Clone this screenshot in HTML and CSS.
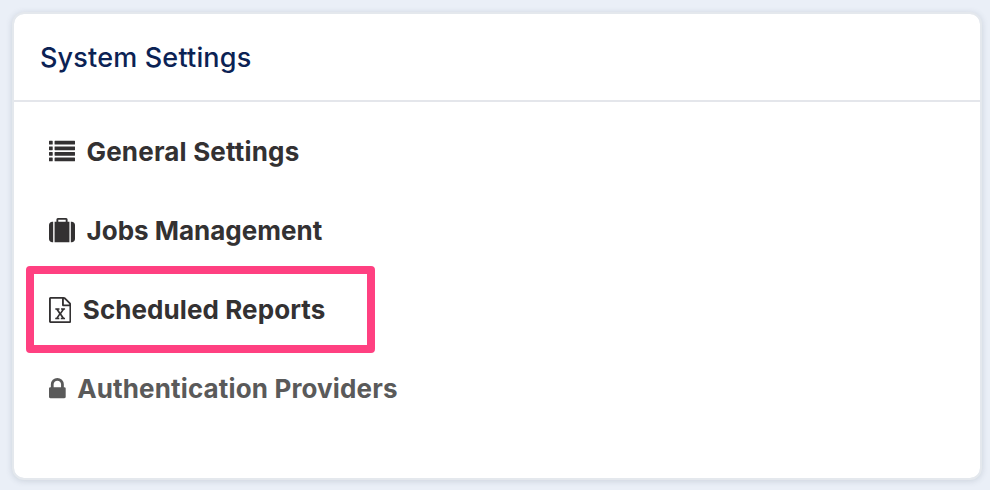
FILE: index.html
```
<!DOCTYPE html>
<html lang="en">
<head>
  <meta charset="utf-8">
  <title>System Settings</title>
  <link rel="stylesheet" href="styles.css">
</head>
<body>

  <div class="card">
    <h1 class="card-header">System Settings</h1>

    <ul class="settings">
      <li class="setting general">
        <svg class="icon icon-list" viewBox="0 0 1792 1792"><path d="M256 1312v192q0 13-9.500 22.500t-22.500 9.500h-192q-13 0-22.500-9.500t-9.500-22.500v-192q0-13 9.500-22.500t22.500-9.500h192q13 0 22.500 9.500t9.500 22.500zm0-384v192q0 13-9.500 22.500t-22.500 9.500h-192q-13 0-22.500-9.500t-9.500-22.500v-192q0-13 9.500-22.500t22.500-9.500h192q13 0 22.500 9.500t9.500 22.500zm0-384v192q0 13-9.500 22.500t-22.500 9.500h-192q-13 0-22.500-9.500t-9.500-22.500v-192q0-13 9.500-22.500t22.500-9.500h192q13 0 22.500 9.500t9.500 22.500zm1536 768v192q0 13-9.500 22.500t-22.500 9.500h-1344q-13 0-22.500-9.500t-9.500-22.500v-192q0-13 9.500-22.500t22.500-9.500h1344q13 0 22.500 9.500t9.500 22.500zm-1536-1152v192q0 13-9.500 22.500t-22.500 9.500h-192q-13 0-22.500-9.500t-9.500-22.500v-192q0-13 9.500-22.500t22.500-9.500h192q13 0 22.500 9.500t9.500 22.500zm1536 768v192q0 13-9.500 22.500t-22.500 9.500h-1344q-13 0-22.500-9.500t-9.500-22.500v-192q0-13 9.500-22.500t22.500-9.500h1344q13 0 22.500 9.500t9.500 22.500zm0-384v192q0 13-9.500 22.500t-22.500 9.500h-1344q-13 0-22.500-9.500t-9.500-22.500v-192q0-13 9.500-22.500t22.500-9.500h1344q13 0 22.500 9.500t9.500 22.500zm0-384v192q0 13-9.500 22.500t-22.500 9.500h-1344q-13 0-22.500-9.500t-9.500-22.500v-192q0-13 9.500-22.500t22.500-9.500h1344q13 0 22.500 9.500t9.500 22.500z"/></svg>
        <span>General Settings</span>
      </li>
      <li class="setting">
        <svg class="icon icon-suitcase" viewBox="0 0 1792 1792"><path d="M640 256h512v-128h-512v128zm-352 0v1408h-64q-92 0-158-66t-66-158v-960q0-92 66-158t158-66h64zm1120 0v1408h-1024v-1408h128v-160q0-40 28-68t68-28h576q40 0 68 28t28 68v160h128zm384 224v960q0 92-66 158t-158 66h-64v-1408h64q92 0 158 66t66 158z"/></svg>
        <span>Jobs Management</span>
      </li>
      <li class="setting highlighted">
        <svg class="icon icon-excel" viewBox="128 0 1536 1792"><path d="M1596 380q28 28 48 76t20 88v1152q0 40-28 68t-68 28h-1344q-40 0-68-28t-28-68v-1600q0-40 28-68t68-28h896q40 0 88 20t76 48zm-444-244v376h376q-10-29-22-41l-313-313q-12-12-41-22zm384 1528v-1024h-416q-40 0-68-28t-28-68v-416h-768v1536h1280zm-979-234v106h281v-106h-75l103-161q5-7 10-16.500t7.500-13.500 3.500-4h2q1 4 5 10 2 4 4.500 7.500t6 8 6.500 8.500l107 161h-76v106h291v-106h-68l-192-273 195-282h67v-107h-279v107h74l-103 159q-4 7-10 16.500t-9 13.500l-2 3h-2q-1-4-5-10-6-11-17-23l-106-159h76v-107h-290v107h68l189 272-194 283h-68z"/></svg>
        <span>Scheduled Reports</span>
      </li>
      <li class="setting muted">
        <svg class="icon icon-lock" viewBox="320 0 1152 1792"><path d="M640 768h512v-192q0-106-75-181t-181-75-181 75-75 181v192zm832 96v576q0 40-28 68t-68 28h-960q-40 0-68-28t-28-68v-576q0-40 28-68t68-28h32v-192q0-184 132-316t316-132 316 132 132 316v192h32q40 0 68 28t28 68z"/></svg>
        <span>Authentication Providers</span>
      </li>
    </ul>
  </div>

</body>
</html>
```
FILE: styles.css
```
* {
  box-sizing: border-box;
}

body {
  margin: 0;
  padding: 12px 8px 10px 12px;
  height: 490px;
  background-color: #eaeff7;
  font-family: Inter, sans-serif;
}

.card {
  width: 970px;
  height: 468px;
  background-color: #fff;
  background-clip: padding-box;
  border: 2px solid #e4e8ed;
  border-radius: 12px;
  box-shadow: 0 1px 6px rgba(60, 80, 100, 0.18);
}

.card-header {
  margin: 0;
  height: 88px;
  padding: 0 26px;
  border-bottom: 2px solid #e4e6eb;
  font-size: 27px;
  font-weight: 500;
  line-height: 87px;
  letter-spacing: 0.18px;
  color: #0b2254;
}

.settings {
  margin: 0;
  padding: 10px 0 0 35px;
  list-style: none;
}

.setting {
  position: relative;
  display: flex;
  align-items: center;
  gap: 11.5px;
  height: 79px;
  font-size: 26px;
  font-weight: 700;
  color: #333132;
}

.general {
  letter-spacing: 0.18px;
}

.muted {
  letter-spacing: 0.14px;
  color: #5a5a5a;
}

.icon {
  height: 26px;
  fill: currentColor;
}

.icon-list,
.icon-suitcase {
  width: 26px;
}

.icon-excel {
  width: 22.3px;
}

.icon-lock {
  width: 16.7px;
}

/* frame drawn around the selected entry */
.highlighted {
  letter-spacing: 0.08px;
}

.highlighted::after {
  content: "";
  position: absolute;
  top: -4px;
  left: -23px;
  box-sizing: border-box;
  width: 349px;
  height: 87px;
  border: 8px solid #ff4081;
  border-radius: 4px;
}
```
